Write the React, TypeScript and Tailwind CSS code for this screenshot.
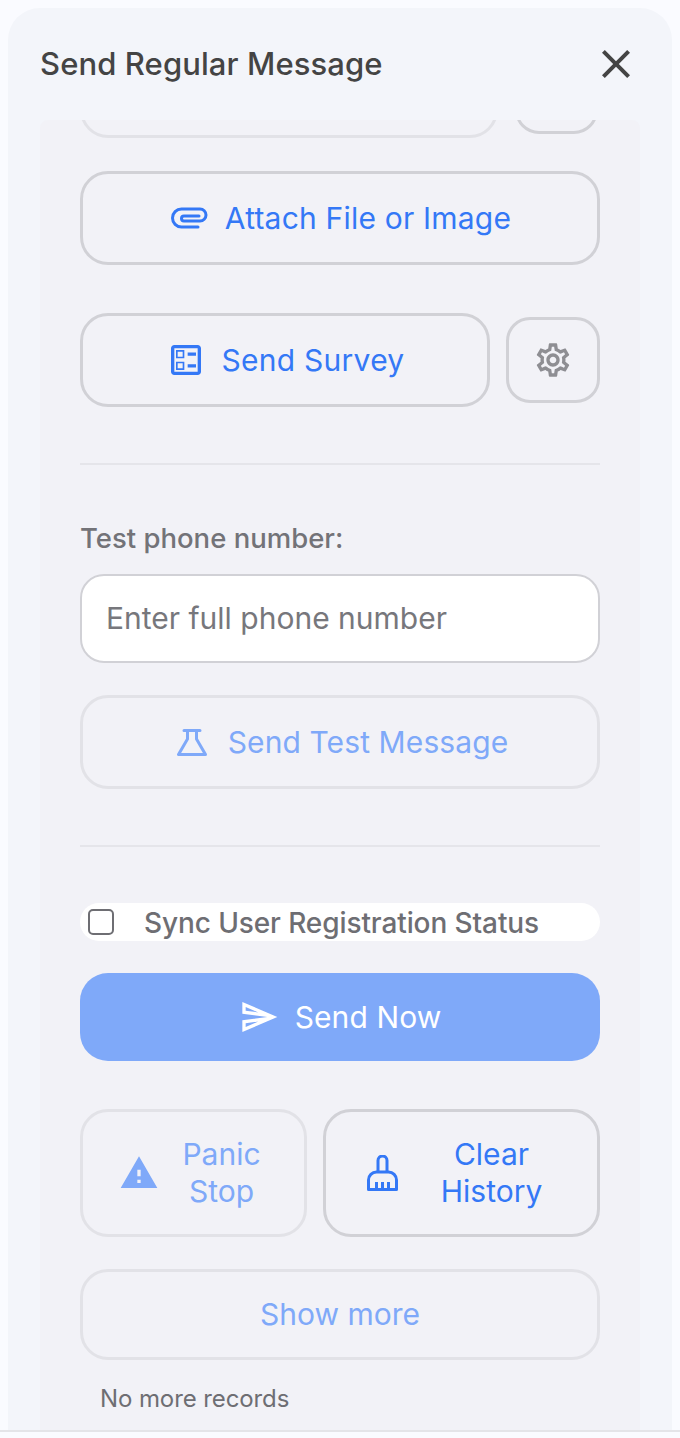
import type { ReactNode } from 'react';
import { MdClose, MdOutlineBallot, MdOutlineSend, MdOutlineSettings, MdWarning } from 'react-icons/md';

function OutlineButton({
  children,
  disabled,
  className = '',
}: {
  children: ReactNode;
  disabled?: boolean;
  className?: string;
}) {
  return (
    <button
      type="button"
      className={`flex items-center justify-center rounded-[28px] border-[3px] text-[30px] leading-[37px] ${
        disabled ? 'border-[#e2e2e7] text-[#7fa9f9]' : 'border-[#d1d1d6] text-[#3478f6]'
      } ${className}`}
    >
      {children}
    </button>
  );
}

function PaperclipIcon() {
  return (
    <svg width="38" height="22" viewBox="0 0 38 22" fill="none" stroke="currentColor" strokeWidth="3" strokeLinecap="round" strokeLinejoin="round">
      <path d="M27 20H10.500a9 9 0 0 1 0-18H29a6 6 0 0 1 0 12H13a2.500 2.500 0 0 1 0-5H28" />
    </svg>
  );
}

function FlaskIcon() {
  return (
    <svg width="30" height="27" viewBox="0 0 30 27" fill="none" stroke="currentColor" strokeWidth="3" strokeLinecap="round" strokeLinejoin="round">
      <path d="M7 1.500H23M10.500 1.500V10L1.500 25.500H28.500L19.500 10V1.500" />
    </svg>
  );
}

function BroomIcon() {
  return (
    <svg width="31" height="36" viewBox="0 0 31 36" fill="none" stroke="currentColor" strokeWidth="3" strokeLinejoin="round" className="shrink-0">
      <path d="M11 17V5.500a4.500 4.500 0 0 1 9 0V17" />
      <path d="M1.500 34.500V25a8 8 0 0 1 8-8H21.500a8 8 0 0 1 8 8V34.500Z" />
      <path d="M9.500 34V27M15.500 34V27M21.500 34V27" />
    </svg>
  );
}

export default function App() {
  return (
    <div className="flex h-[1438px] w-[680px] flex-col overflow-hidden bg-[#fafbff] font-['Inter',sans-serif]">
      <div className="mx-2 mt-2 flex min-h-0 flex-1 flex-col rounded-t-[32px] bg-[#f3f5fa]">
        {/* Header */}
        <div className="flex h-[112px] shrink-0 items-start justify-between px-8 pt-[34px]">
          <h1 className="text-[31px] font-medium leading-[44px] tracking-[0.1px] text-[#444444]">Send Regular Message</h1>
          <MdClose className="mt-[-2px] h-[48px] w-[48px] text-[#444444]" />
        </div>

        {/* Scrolled content */}
        <div className="mx-8 min-h-0 flex-1 overflow-hidden rounded-t-lg bg-[#f2f2f7] px-10">
          <div className="-mt-[73px]">
            <div className="flex items-start gap-[17px]">
              <div className="h-[91px] w-[418px] rounded-[28px] border-[3px] border-[#e2e2e7]" />
              <div className="h-[87px] w-[83px] rounded-[24px] border-[3px] border-[#d1d1d6]" />
            </div>

            <OutlineButton className="mt-[33px] h-[94px] w-full gap-4 pl-[2px] tracking-[0.2px]">
              <PaperclipIcon />
              Attach File or Image
            </OutlineButton>

            <div className="mt-[48px] flex items-center gap-4">
              <OutlineButton className="h-[94px] w-[410px] gap-4 tracking-[0.25px]">
                <MdOutlineBallot className="h-[40px] w-[40px]" />
                Send Survey
              </OutlineButton>
              <div className="flex h-[86px] w-[94px] items-center justify-center rounded-[24px] border-[3px] border-[#d1d1d6]">
                <MdOutlineSettings className="h-[40px] w-[40px] text-[#8e8e93]" />
              </div>
            </div>

            <div className="mt-[56px] h-[2px] bg-[#e5e5ea]" />

            <label className="mt-[57px] block text-[27.5px] font-medium leading-[32px] text-[#737378]">
              Test phone number:
            </label>
            <input
              readOnly
              placeholder="Enter full phone number"
              className="mt-[20px] block h-[89px] w-full rounded-[24px] border-2 border-[#d1d1d6] bg-white pb-[2px] pl-[24px] pr-[25px] text-[30px] text-[#6e6e73] placeholder:text-[#77777c]"
            />

            <OutlineButton disabled className="mt-[32px] h-[94px] w-full gap-[21px] pl-[5px] tracking-[0.1px]">
              <FlaskIcon />
              Send Test Message
            </OutlineButton>

            <div className="mt-[56px] h-[2px] bg-[#e5e5ea]" />

            <div className="mt-[56px] flex h-[38px] items-center rounded-full bg-white pl-2">
              <span className="h-[26px] w-[26px] rounded-[5px] border-2 border-[#6e6e73] bg-white" />
              <span className="ml-[30px] pt-[2px] text-[28px] font-medium leading-[38px] tracking-[-0.1px] text-[#6e6e73]">
                Sync User Registration Status
              </span>
            </div>

            <button
              type="button"
              className="mt-[32px] flex h-[88px] w-full items-center justify-center gap-[16px] rounded-[28px] bg-[#7fa9f9] text-[30px] tracking-[0.1px] text-white"
            >
              <MdOutlineSend className="h-[40px] w-[40px]" />
              Send Now
            </button>

            <div className="mt-[48px] flex gap-4">
              <OutlineButton disabled className="h-[128px] w-[227px] gap-[23px] pr-[7px]">
                <MdWarning className="h-[40px] w-[40px]" />
                <span className="text-center">
                  Panic
                  <br />
                  Stop
                </span>
              </OutlineButton>
              <OutlineButton className="h-[128px] w-[277px] gap-[43px] pr-[14px]">
                <BroomIcon />
                <span className="text-center">
                  Clear
                  <br />
                  History
                </span>
              </OutlineButton>
            </div>

            <OutlineButton disabled className="mt-[32px] h-[91px] w-full">
              Show more
            </OutlineButton>

            <p className="ml-5 mt-[24px] text-[24px] leading-[30px] tracking-[-0.1px] text-[#6e6e73]">
              No more records
            </p>
          </div>
        </div>
      </div>
      <div className="h-[8px] shrink-0 border-t-2 border-[#e4e4e8] bg-[#fafbff]" />
    </div>
  );
}
